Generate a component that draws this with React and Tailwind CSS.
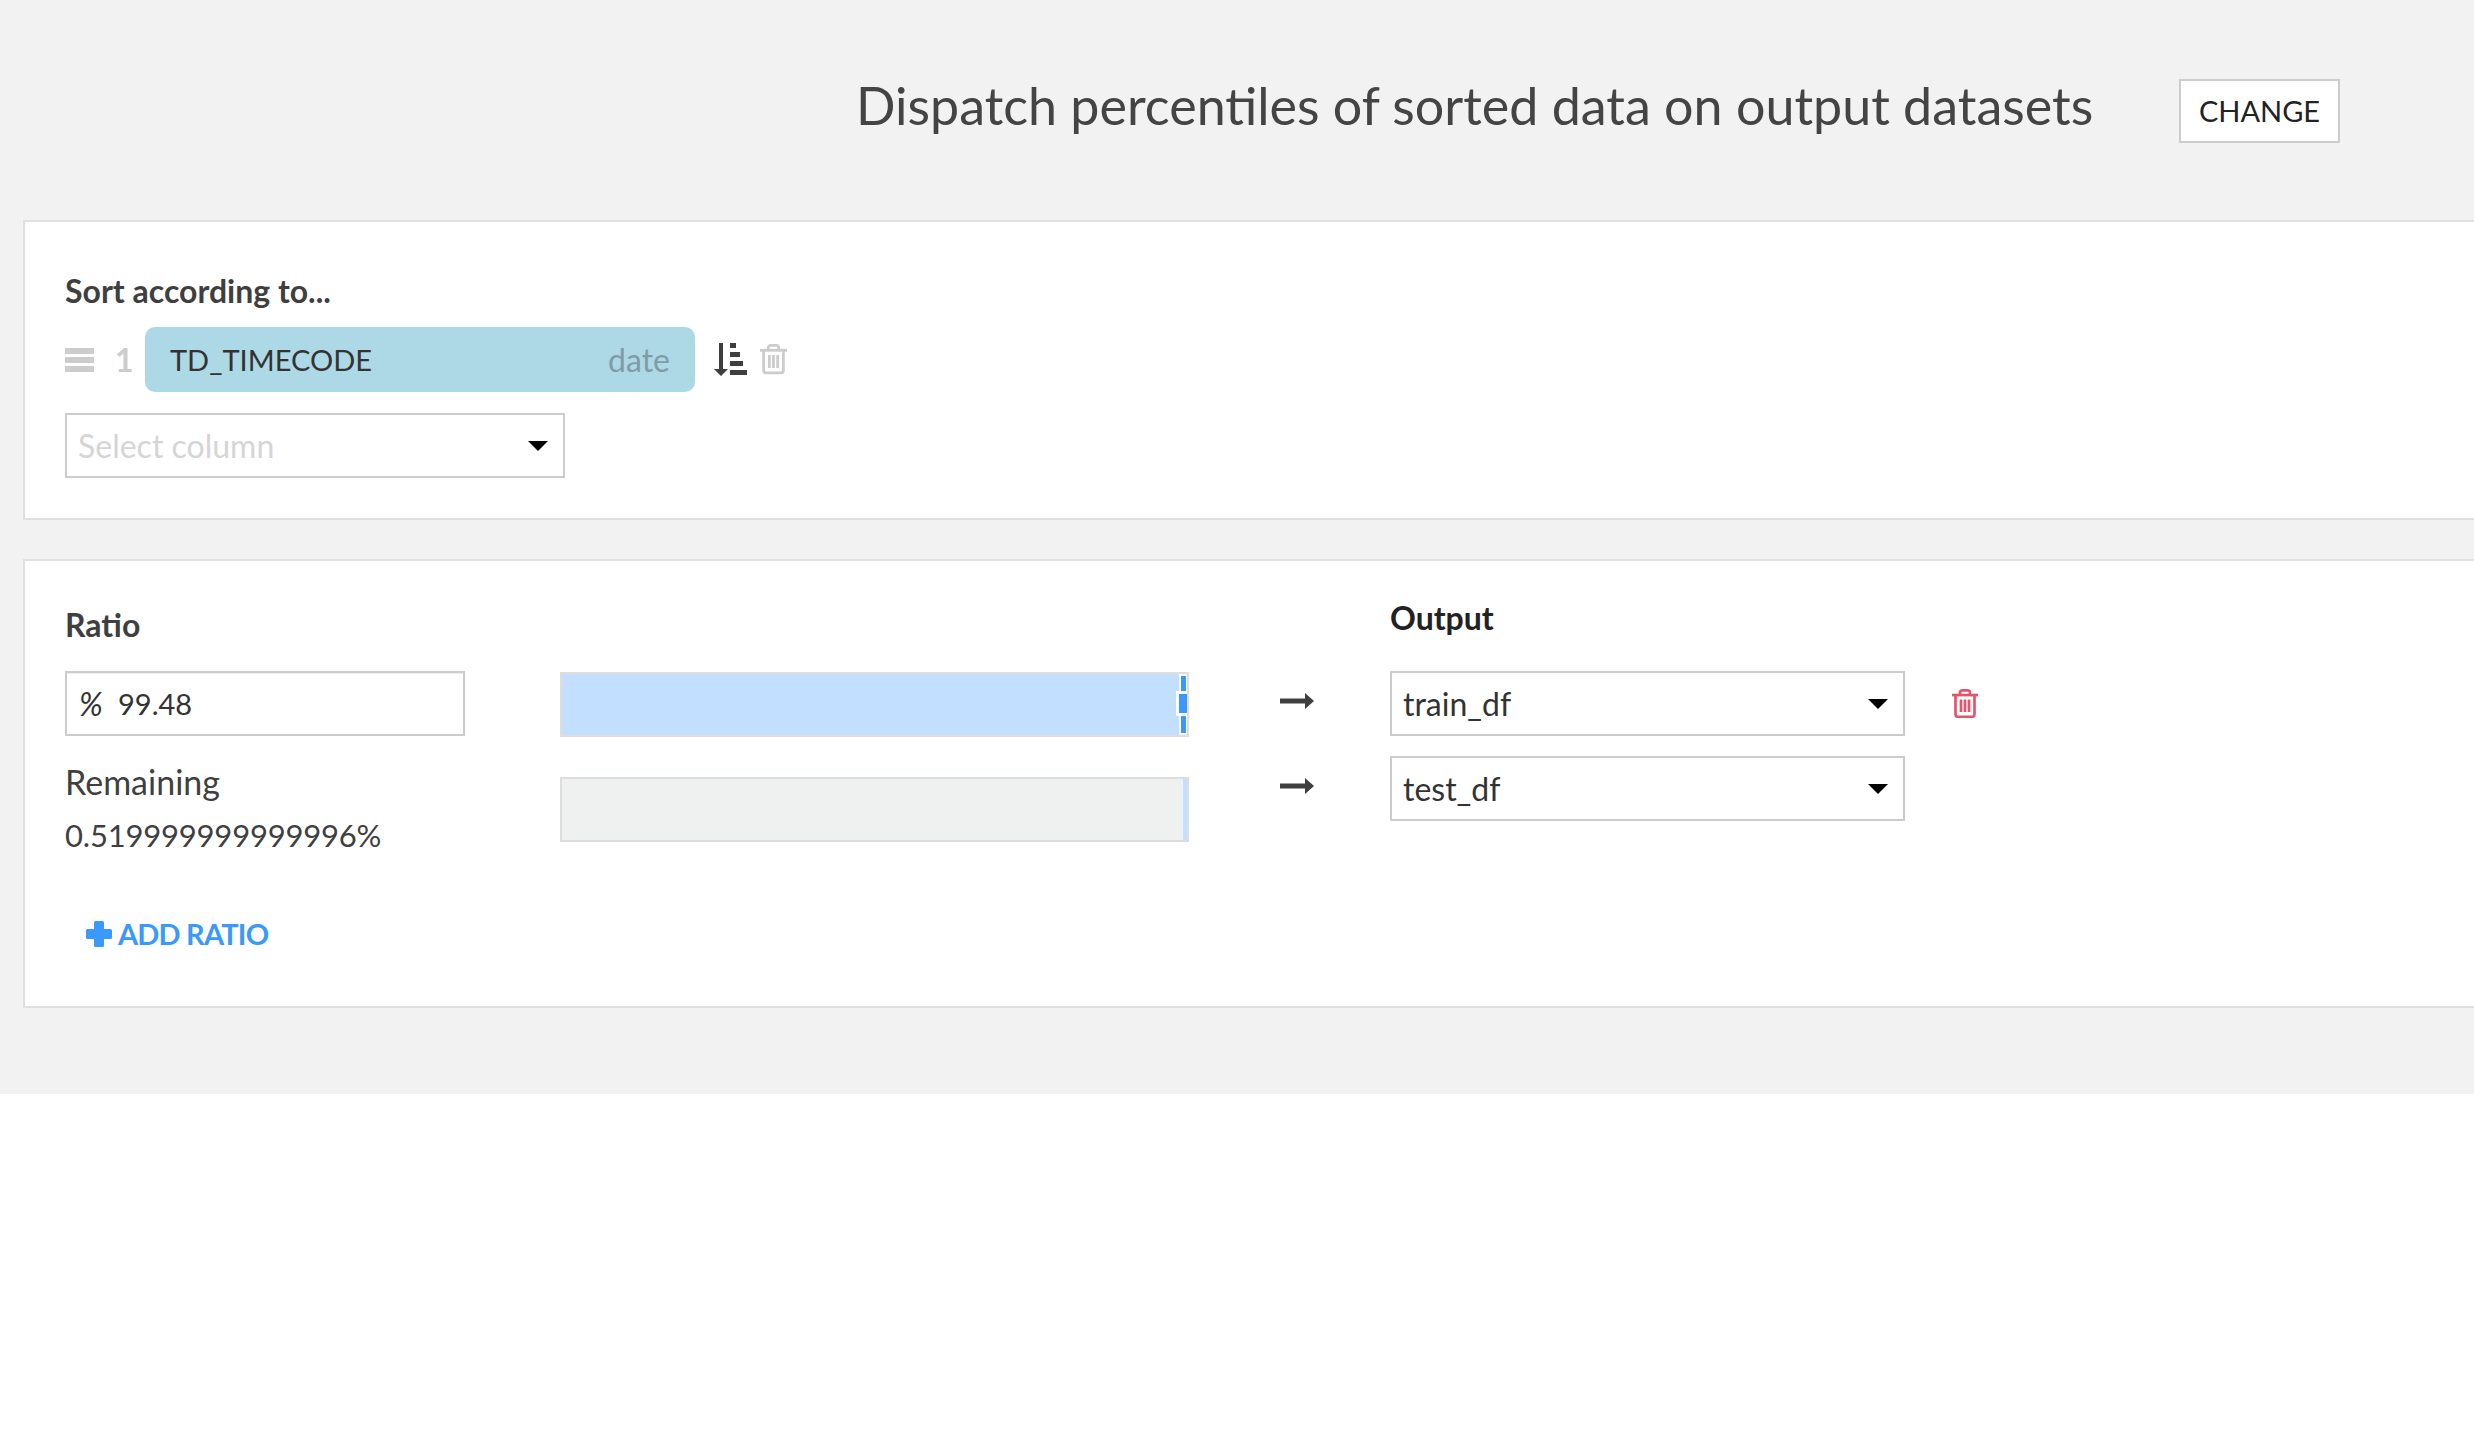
const font = { fontFamily: '"Lato", "Noto Sans", sans-serif' };

const Caret = () => (
    <svg width="20" height="10" viewBox="0 0 20 10" className="shrink-0">
        <path d="M0 0h20L10 10z" fill="#000" />
    </svg>
);

const Trash = ({ color, size }) => (
    <svg width={size} height={size * 1.12} viewBox="0 0 26 29" fill="none" stroke={color} strokeWidth="2.7">
        <path d="M0 6h26" />
        <path d="M8 6V3.500C8 2 9 1.300 10.500 1.300h5C17 1.300 18 2 18 3.500V6" />
        <path d="M3.500 6v19.500c0 1.500 1 2.200 2.300 2.200h14.400c1.300 0 2.300-.7 2.300-2.200V6" />
        <path d="M9 10.500v12.500M13 10.500v12.500M17 10.500v12.500" />
    </svg>
);

const Arrow = () => (
    <svg width="34" height="16" viewBox="0 0 34 16" className="block">
        <path d="M0 5.500h25V0l9 8-9 8v-5.500H0z" fill="#3f3f3f" />
    </svg>
);

const Select = ({ children, muted, className }) => (
    <div className={`flex h-[65px] items-center justify-between border-2 border-[#cccccc] bg-white pl-[11px] pr-[15px] text-[32px] ${muted ? 'text-[#d5d5d5]' : 'text-[#333333]'} ${className}`}>
        <span>{children}</span>
        <Caret />
    </div>
);

const App = () => {
    return (
        <div className="min-h-[1440px] bg-white text-[#3f3f3f]" style={font}>
            <div className="h-[1094px] overflow-hidden bg-[#f2f2f2] pl-[23px]">
                {/* top bar */}
                <div className="flex h-[220px] items-start">
                    <h1 className="ml-[833px] mt-[70px] w-[1323px] whitespace-nowrap text-[52px] font-normal leading-[70px] text-[#444444]">
                        Dispatch percentiles of sorted data on output datasets
                    </h1>
                    <button className="mt-[79px] h-[64px] w-[161px] border-2 border-[#cccccc] bg-white text-[29px] text-[#222222]">
                        CHANGE
                    </button>
                </div>

                {/* sort card */}
                <div className="h-[300px] w-[2500px] border-2 border-[#e0e0e0] bg-white pl-10 pt-[49px]">
                    <div className="text-[32px] font-bold leading-10">Sort according to...</div>
                    <div className="mt-[16px] flex h-[65px] items-center">
                        <div className="flex w-[29px] flex-col gap-[3px]">
                            <div className="h-[6px] bg-[#cccccc]" />
                            <div className="h-[6px] bg-[#cccccc]" />
                            <div className="h-[6px] bg-[#cccccc]" />
                        </div>
                        <span className="ml-[21px] w-[30px] text-[32px] font-bold text-[#cccccc]">1</span>
                        <div className="flex h-[65px] w-[550px] items-center justify-between rounded-[10px] bg-[#add8e6] px-[25px] text-[#333333]">
                            <span className="text-[29px]">TD_TIMECODE</span>
                            <span className="text-[32px] text-[#7f9ca6]">date</span>
                        </div>
                        <svg width="33" height="33" viewBox="0 0 33 33" className="ml-[19px]">
                            <path d="M5 0h4v26h5L7 33 0 26h5z" fill="#3f3f3f" />
                            <path d="M16 0h6v5h-6zM16 9h10v5H16zM16 18h13v5H16zM16 27h17v5H16z" fill="#3f3f3f" />
                        </svg>
                        <div className="ml-[13px]">
                            <Trash color="#cccccc" size={27} />
                        </div>
                    </div>
                    <Select muted className="mt-[21px] w-[500px]">Select column</Select>
                </div>

                {/* ratio card */}
                <div className="mt-[39px] flex h-[449px] w-[2500px] border-2 border-[#e0e0e0] bg-white pl-10">
                    <div className="w-[495px]">
                        <div className="mt-[44px] text-[32px] font-bold leading-10">Ratio</div>
                        <div className="mt-[26px] flex h-[65px] w-[400px] items-center border-2 border-[#cccccc] pl-[12px] text-[#333333] shadow-[inset_0_1px_1px_rgba(0,0,0,0.075)]">
                            <span className="w-[39px] text-[32px] italic">%</span>
                            <span className="text-[29px]">99.48</span>
                        </div>
                        <div className="mt-[26px] text-[34px] leading-[40px]">Remaining</div>
                        <div className="mt-[13px] text-[31px] leading-[40px] tracking-[-0.2px]">0.519999999999996%</div>
                        <div className="ml-[21px] mt-[59px] flex items-center text-[29px] font-bold leading-10 tracking-[-0.8px] text-[#3b99fc]">
                            <svg width="26" height="26" viewBox="0 0 26 26" className="mr-[6px]">
                                <path d="M8 1.500A1.500 1.500 0 0 1 9.500 0h7A1.500 1.500 0 0 1 18 1.500V8h6.500A1.500 1.500 0 0 1 26 9.500v7a1.500 1.500 0 0 1-1.500 1.500H18v6.500a1.500 1.500 0 0 1-1.500 1.500h-7A1.500 1.500 0 0 1 8 24.500V18H1.500A1.500 1.500 0 0 1 0 16.500v-7A1.500 1.500 0 0 1 1.500 8H8z" fill="#3b99fc" />
                            </svg>
                            ADD RATIO
                        </div>
                    </div>

                    <div className="w-[720px] pt-[111px]">
                        <div className="relative h-[65px] w-[629px] border-2 border-[#dddddd] bg-[#c2dfff]">
                            <div className="absolute bottom-0 right-0 top-0 w-[8px] border-y-2 border-l-2 border-r border-white bg-[#3b99fc]" />
                            <div className="absolute right-0 top-[17px] h-[25px] w-[11px] border-y-[3px] border-l-[3px] border-white bg-[#3b99fc]" />
                        </div>
                        <div className="mt-[40px] h-[65px] w-[629px] border-2 border-[#dddddd] bg-[#eff1f0]">
                            <div className="ml-auto h-full w-[4px] bg-[#c2dfff]" />
                        </div>
                    </div>

                    <div className="w-[110px] pt-[132px]">
                        <Arrow />
                        <div className="mt-[69px]">
                            <Arrow />
                        </div>
                    </div>

                    <div>
                        <div className="mt-[37px] text-[32px] font-bold leading-10 text-[#222222]">Output</div>
                        <div className="mt-[33px] flex items-center">
                            <Select className="w-[515px]">train_df</Select>
                            <div className="ml-[47px]">
                                <Trash color="#e2566c" size={26} />
                            </div>
                        </div>
                        <Select className="mt-[20px] w-[515px]">test_df</Select>
                    </div>
                </div>
            </div>
        </div>
    );
};

export default App;
